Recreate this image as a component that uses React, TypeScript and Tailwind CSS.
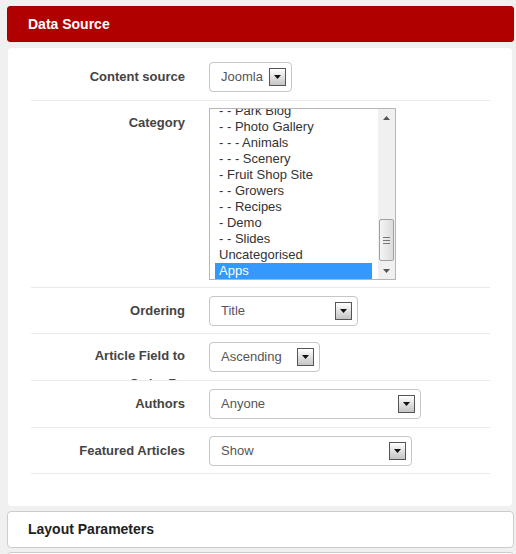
import React from 'react';

const categories: Array<[string, boolean]> = [
  ['- - Park Blog', false],
  ['- - Photo Gallery', false],
  ['- - - Animals', false],
  ['- - - Scenery', false],
  ['- Fruit Shop Site', false],
  ['- - Growers', false],
  ['- - Recipes', false],
  ['- Demo', false],
  ['- - Slides', false],
  ['Uncategorised', false],
  ['Apps', true],
];

function DropButton() {
  return (
    <span className="flex h-[18px] w-[17px] items-center justify-center border border-[#555] bg-linear-to-b from-white to-[#c4c4c4]">
      <svg width="7" height="4" viewBox="0 0 7 4">
        <path d="M0 0h7L3.5 4z" fill="#111" />
      </svg>
    </span>
  );
}

function Select({ value, width }: Readonly<{ value: string; width: string }>) {
  return (
    <div
      className={`flex h-[30px] items-center justify-between rounded-[4px] border border-[#c6c6c6] bg-white pl-[11px] pr-[5px] text-[13px] text-[#555] ${width}`}
    >
      <span>{value}</span>
      <DropButton />
    </div>
  );
}

function Row({
  label,
  height = 'h-[47px]',
  labelClass = 'leading-[30px]',
  align = 'items-center',
  children,
}: Readonly<{
  label: string;
  height?: string;
  labelClass?: string;
  align?: string;
  children: React.ReactNode;
}>) {
  return (
    <div className={`flex overflow-hidden border-b border-[#eaeaea] ${height} ${align}`}>
      <div className={`w-[154px] shrink-0 text-right text-[13px] font-bold text-[#444] ${labelClass}`}>
        {label}
      </div>
      <div className="ml-[24px]">{children}</div>
    </div>
  );
}

function CategoryList() {
  return (
    <div className="flex h-[172px] w-[187px] border border-[#b5b5b5] bg-white">
      <div className="flex-1 overflow-hidden pl-[5px] pr-[6px]">
        <div className="-mt-[6px]">
          {categories.map(([name, selected]) => (
            <div
              key={name}
              className={`h-[16px] whitespace-nowrap pl-[4px] text-[13px] leading-[16px] ${
                selected ? 'bg-[#3399ff] text-white' : 'text-[#333]'
              }`}
            >
              {name}
            </div>
          ))}
        </div>
      </div>
      <div className="flex w-[17px] flex-col bg-[#f0f0f0]">
        <div className="flex h-[17px] items-center justify-center">
          <svg width="7" height="4" viewBox="0 0 7 4">
            <path d="M0 4h7L3.5 0z" fill="#555" />
          </svg>
        </div>
        <div className="flex flex-1 flex-col justify-end px-[1px] pb-[1px]">
          <div className="flex h-[42px] flex-col items-center justify-center gap-[2px] rounded-[2px] border border-[#a0a0a0] bg-linear-to-r from-[#f4f4f4] to-[#dcdcdc]">
            <span className="h-px w-[7px] bg-[#777]" />
            <span className="h-px w-[7px] bg-[#777]" />
            <span className="h-px w-[7px] bg-[#777]" />
          </div>
        </div>
        <div className="flex h-[17px] items-center justify-center">
          <svg width="7" height="4" viewBox="0 0 7 4">
            <path d="M0 0h7L3.5 4z" fill="#555" />
          </svg>
        </div>
      </div>
    </div>
  );
}

export default function App() {
  return (
    <div className="h-[554px] w-[516px] overflow-hidden bg-[#f0f0f0] pl-[7px] pt-[6px] font-['Liberation_Sans',Arial,sans-serif]">
      <div className="w-[507px]">
        <div className="flex h-[36px] items-center rounded-[3px] border border-[#a40000] bg-[#b00000] pl-[20px] text-[14px] font-bold text-white">
          Data Source
        </div>

        <div className="ml-[1px] mt-[6px] h-[458px] w-[504px] rounded-[4px] bg-white pl-[23px] pr-[22px] pt-[6px]">
          <Row label="Content source">
            <Select value="Joomla" width="w-[83px]" />
          </Row>
          <Row label="Category" height="h-[187px]" align="items-start" labelClass="mt-[7px] leading-[30px]">
            <div className="pt-[7px]">
              <CategoryList />
            </div>
          </Row>
          <Row label="Ordering" height="h-[46px]">
            <Select value="Title" width="w-[149px]" />
          </Row>
          <Row label="Article Field to Order By" align="items-start" labelClass="mt-[8px] leading-[28px] pl-[40px]">
            <div className="pt-[8px]">
              <Select value="Ascending" width="w-[111px]" />
            </div>
          </Row>
          <Row label="Authors">
            <Select value="Anyone" width="w-[212px]" />
          </Row>
          <Row label="Featured Articles" height="h-[46px]">
            <Select value="Show" width="w-[203px]" />
          </Row>
        </div>

        <div className="mt-[5px] flex h-[37px] items-center rounded-[4px] border border-[#cccccc] bg-white pl-[20px] text-[14px] font-bold text-[#222]">
          Layout Parameters
        </div>
        <div className="mt-[4px] h-[20px] rounded-[4px] border border-[#cccccc] bg-white" />
      </div>
    </div>
  );
}
